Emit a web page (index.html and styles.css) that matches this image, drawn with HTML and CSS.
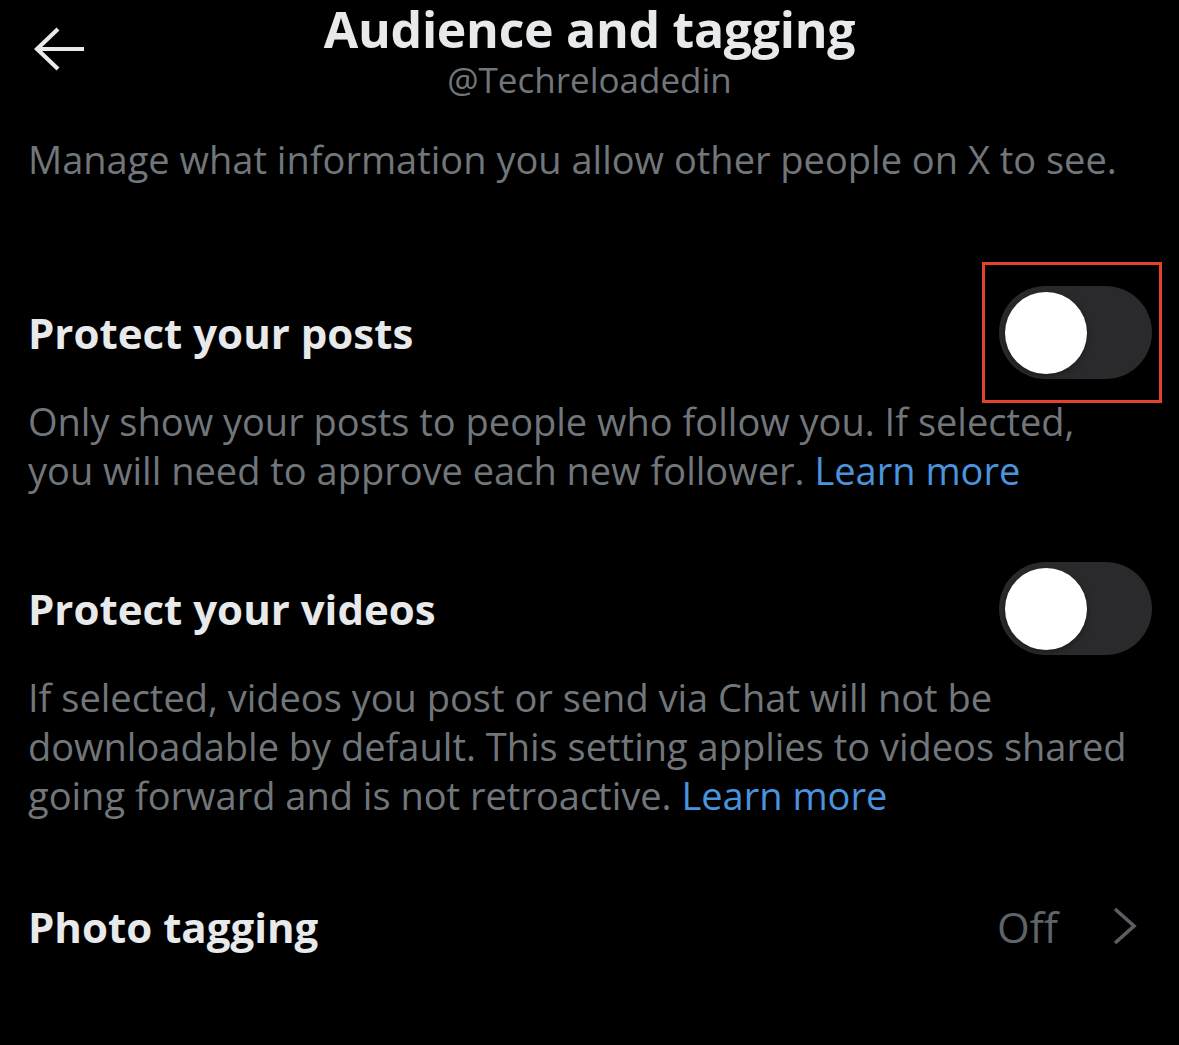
FILE: index.html
```html
<!DOCTYPE html>
<html lang="en">
<head>
<meta charset="utf-8">
<title>Audience and tagging</title>
<link rel="stylesheet" href="styles.css">
</head>
<body>
<div class="screen">
  <header class="topbar">
    <div class="back">
      <svg width="52" height="46" viewBox="0 0 52 46" aria-hidden="true">
        <path d="M3 23 H50 M24 3 L3 23 L24 43" fill="none" stroke="#e7e9ea" stroke-width="4.2" stroke-linecap="butt" stroke-linejoin="miter"/>
      </svg>
    </div>
    <div class="titles">
      <h1 class="title">Audience and tagging</h1>
      <div class="handle">@Techreloadedin</div>
    </div>
    <div></div>
  </header>

  <p class="intro">Manage what information you allow other people on X to see.</p>

  <section class="setting first">
    <div class="row">
      <h2 class="label">Protect your posts</h2>
      <span class="toggle-wrap highlighted">
        <span class="toggle"><span class="knob"></span></span>
      </span>
    </div>
    <p class="desc">Only show your posts to people who follow you. If selected, you will need to approve each new follower. <a class="link" href="#">Learn more</a></p>
  </section>

  <section class="setting second">
    <div class="row">
      <h2 class="label">Protect your videos</h2>
      <span class="toggle-wrap">
        <span class="toggle"><span class="knob"></span></span>
      </span>
    </div>
    <p class="desc">If selected, videos you post or send via Chat will not be downloadable by default. This setting applies to videos shared going forward and is not retroactive. <a class="link" href="#">Learn more</a></p>
  </section>

  <section class="setting third">
    <div class="row nav-row">
      <h2 class="label">Photo tagging</h2>
      <div class="value">
        <span class="off">Off</span>
        <svg class="chev" width="26" height="38" viewBox="0 0 26 38" aria-hidden="true">
          <path d="M3 2 L22 19 L3 36" fill="none" stroke="#5b5f63" stroke-width="3.6"/>
        </svg>
      </div>
    </div>
  </section>
</div>
</body>
</html>
```

FILE: styles.css
```css
* { box-sizing: border-box; }
html, body {
  margin: 0;
  padding: 0;
  background: #000;
}
body {
  font-family: "Open Sans", Roboto, "Liberation Sans", sans-serif;
  color: #e7e9ea;
  width: 1179px;
  height: 1045px;
  overflow: hidden;
}
.screen {
  padding: 0 27px 0 28px;
}
.topbar {
  display: grid;
  grid-template-columns: 1fr auto 1fr;
  align-items: start;
  margin: 0 -27px 0 -28px;
}
.back {
  padding: 26px 0 0 34px;
  line-height: 0;
}
.titles {
  text-align: center;
}
.title {
  margin: 0;
  font-size: 50px;
  font-weight: 700;
  line-height: 58px;
  letter-spacing: -0.3px;
  color: #e7e9ea;
}
.handle {
  font-size: 35px;
  line-height: 44px;
  color: #71767b;
}
.intro {
  margin: 32px 0 0;
  font-size: 38px;
  line-height: 50px;
  color: #71767b;
  white-space: nowrap;
}
.setting { margin: 0; }
.setting.first { margin-top: 102px; }
.setting.second { margin-top: 67px; }
.setting.third { margin-top: 76px; }
.row {
  display: flex;
  align-items: center;
  justify-content: space-between;
  height: 93px;
}
.nav-row { height: 60px; }
.label {
  margin: 0;
  font-size: 42px;
  font-weight: 700;
  color: #e7e9ea;
}
.desc {
  margin: 18px 0 0;
  font-size: 38px;
  line-height: 49px;
  color: #71767b;
  max-width: 1112px;
}
.link {
  color: #4a94df;
  text-decoration: none;
}
.toggle-wrap {
  position: relative;
  display: inline-flex;
}
.highlighted::after {
  content: "";
  position: absolute;
  left: -17px;
  right: -10px;
  top: -24px;
  bottom: -24px;
  border: 3px solid #e2432a;
}
.toggle {
  display: inline-flex;
  align-items: center;
  width: 153px;
  height: 93px;
  border-radius: 47px;
  background: #2a2a2d;
  padding-left: 6px;
}
.knob {
  width: 82px;
  height: 82px;
  border-radius: 50%;
  background: #fff;
  box-shadow: 0 2px 6px rgba(0, 0, 0, 0.35);
}
.value {
  display: flex;
  align-items: center;
  gap: 54px;
  margin-right: 14px;
}
.off {
  font-size: 42px;
  color: #5f6468;
}
.chev { display: block; }
```
